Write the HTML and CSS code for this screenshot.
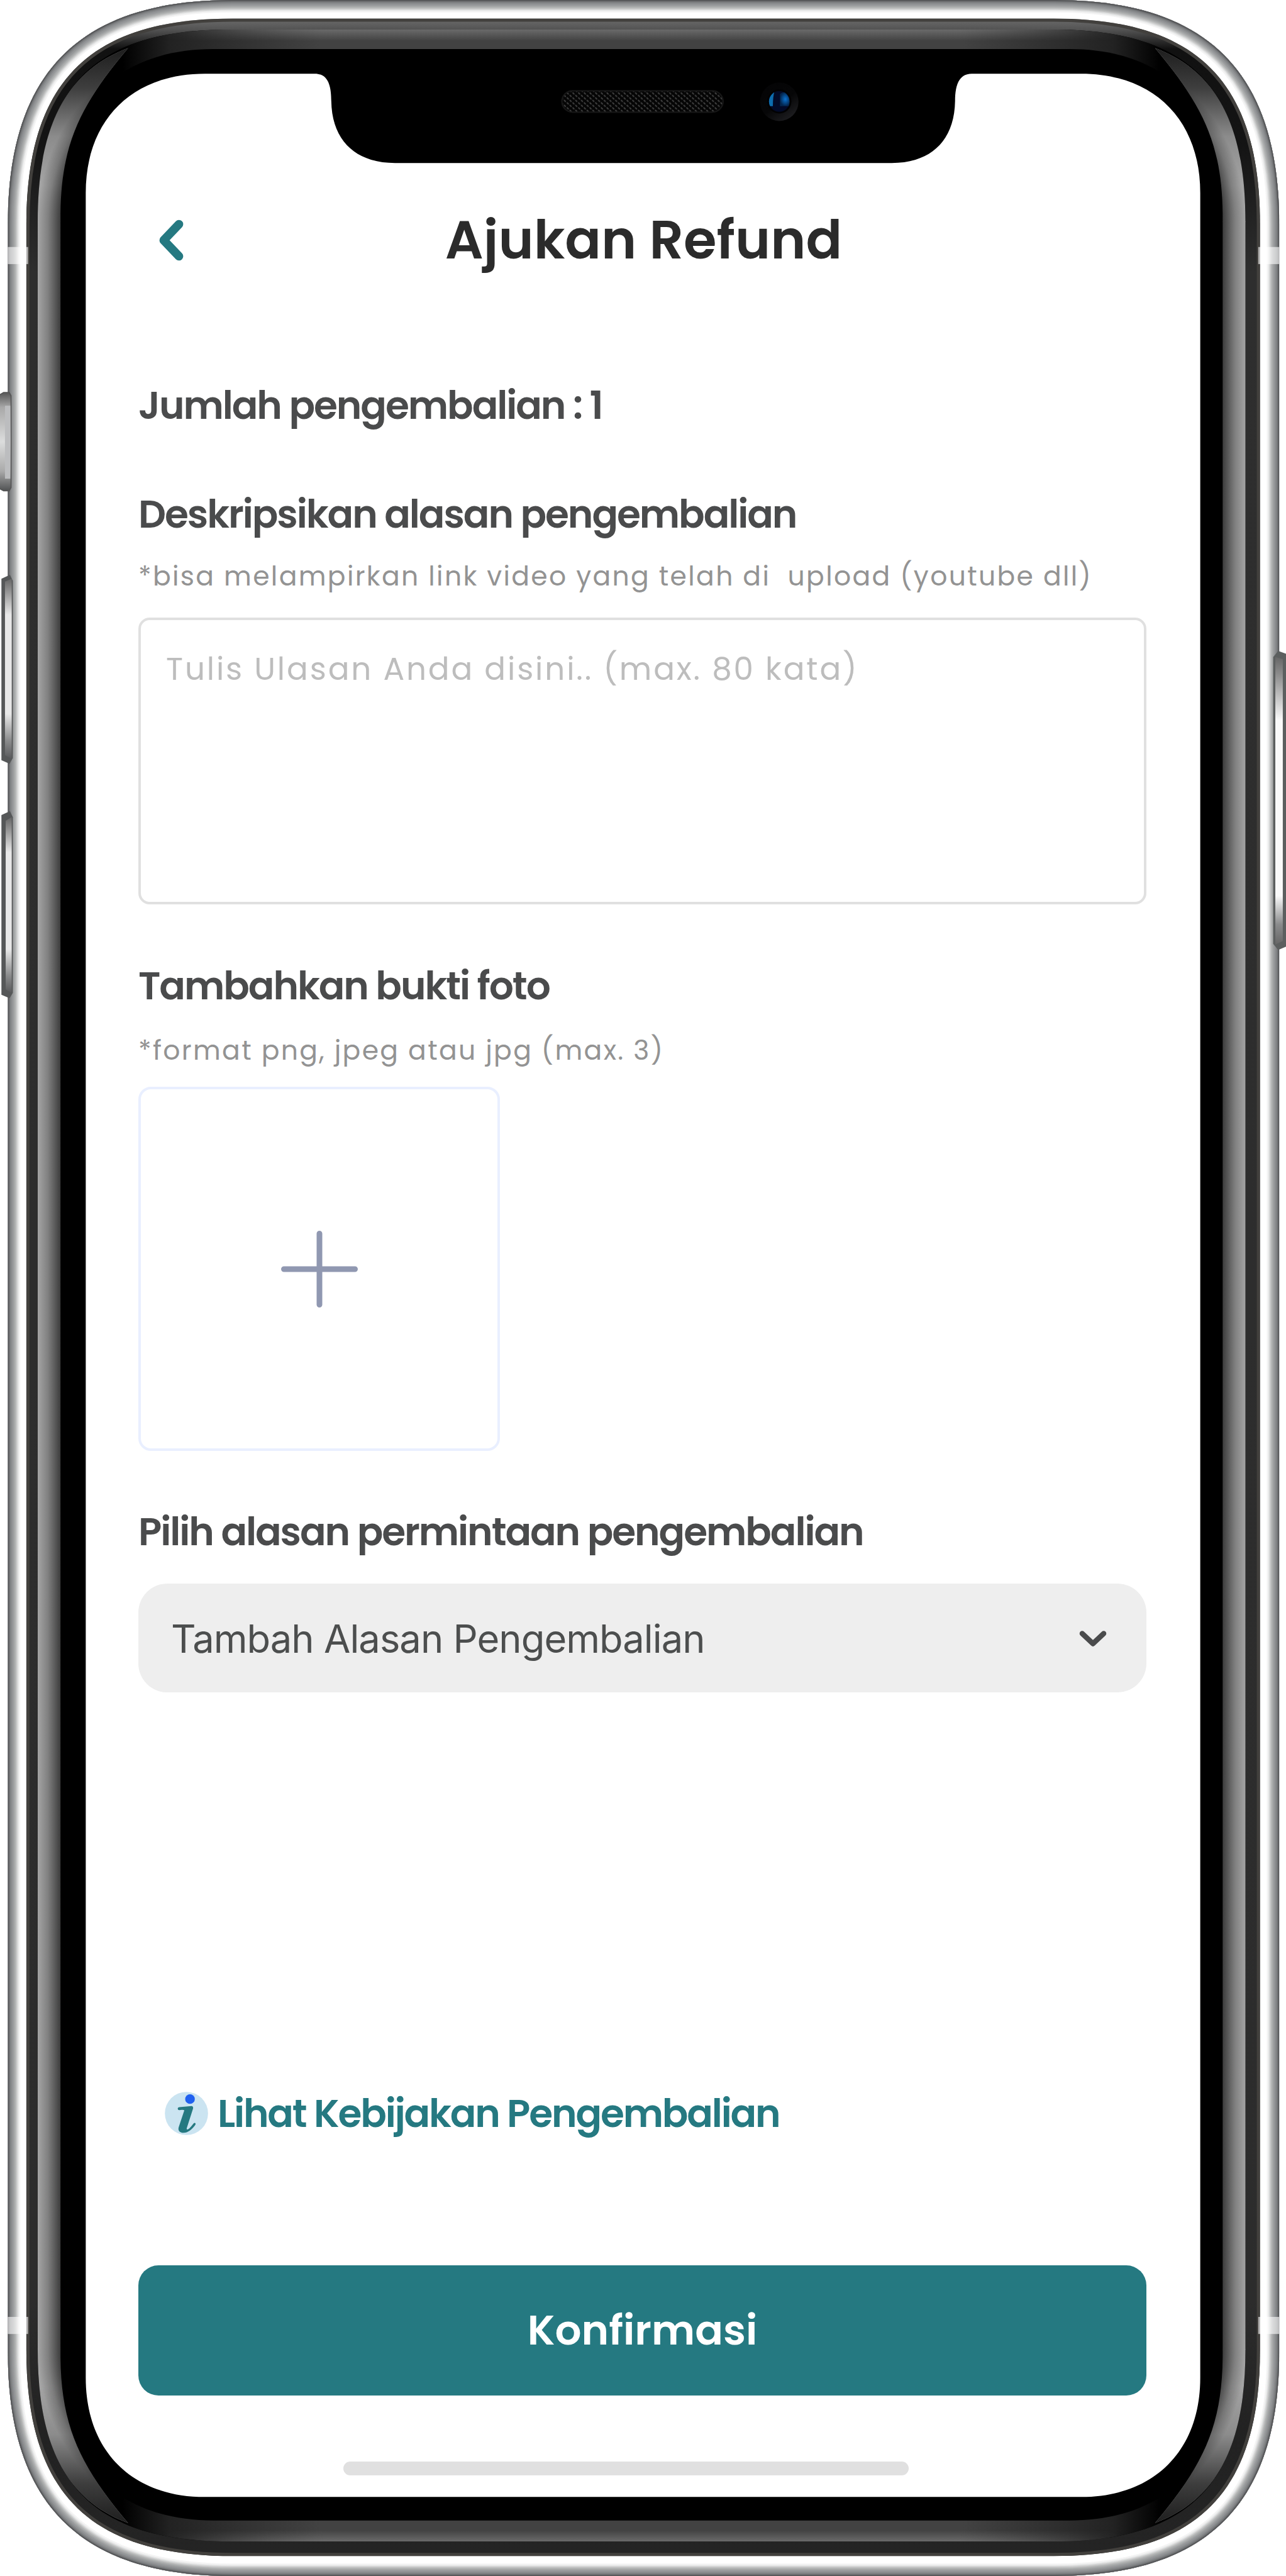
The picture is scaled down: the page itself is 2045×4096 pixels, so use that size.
FILE: index.html
```html
<!DOCTYPE html>
<html lang="id">
<head>
<meta charset="utf-8">
<title>Ajukan Refund</title>
<link rel="stylesheet" href="styles.css">
</head>
<body>
<div class="phone">
  <svg class="frame" viewBox="0 0 3614 7238" preserveAspectRatio="none" aria-hidden="true">
    <defs>
      <path id="body" d="M22 630C22 203 225 0 652 0H2965C3392 0 3595 203 3595 630V6608C3595 7035 3392 7238 2965 7238H652C225 7238 22 7035 22 6608Z"/>
      <path id="rim" d="M74 632C74 230 252 52 654 52H2961C3363 52 3541 230 3541 632V6602C3541 7004 3363 7182 2961 7182H654C252 7182 74 7004 74 6602Z"/>
      <path id="bezel" d="M106 623C106 243 266 83 646 83H2960C3340 83 3500 243 3500 623V6601C3500 6981 3340 7141 2960 7141H646C266 7141 106 6981 106 6601Z"/>
      <path id="glass" d="M170 568C170 299 331 138 600 138H3006C3275 138 3436 299 3436 568V6652C3436 6921 3275 7082 3006 7082H600C331 7082 170 6921 170 6652Z"/>
      <clipPath id="bodyClip"><use href="#body"/></clipPath>
      <clipPath id="rimClip"><use href="#rim"/></clipPath>
      <clipPath id="bezelClip"><use href="#bezel"/></clipPath>
      <linearGradient id="rimFill" gradientUnits="userSpaceOnUse" x1="0" y1="52" x2="0" y2="7182">
        <stop offset="0" stop-color="#6c6c6c"/><stop offset=".0045" stop-color="#525252"/>
        <stop offset=".012" stop-color="#111"/><stop offset=".05" stop-color="#141414"/>
        <stop offset=".1" stop-color="#2e2e2e"/><stop offset=".9" stop-color="#2c2c2c"/>
        <stop offset=".95" stop-color="#222"/><stop offset="1" stop-color="#242424"/>
      </linearGradient>
      <linearGradient id="topGlow" gradientUnits="userSpaceOnUse" x1="345" y1="0" x2="3261" y2="0">
        <stop offset="0" stop-color="#000"/><stop offset=".045" stop-color="#222"/>
        <stop offset=".19" stop-color="#424242"/><stop offset=".81" stop-color="#424242"/>
        <stop offset=".955" stop-color="#222"/><stop offset="1" stop-color="#000"/>
      </linearGradient>
      <linearGradient id="fadeX" gradientUnits="userSpaceOnUse" x1="450" y1="0" x2="3156" y2="0">
        <stop offset="0" stop-color="#000"/><stop offset=".17" stop-color="#fff"/>
        <stop offset=".83" stop-color="#fff"/><stop offset="1" stop-color="#000"/>
      </linearGradient>
      <mask id="fadeMask" maskUnits="userSpaceOnUse" x="0" y="0" width="3614" height="7238"><rect width="3614" height="7238" fill="url(#fadeX)"/></mask>
      <linearGradient id="sheenTop" x1="0" y1="0" x2="0" y2="1">
        <stop offset="0" stop-color="#6a6a6a"/><stop offset="1" stop-color="#6a6a6a" stop-opacity="0"/>
      </linearGradient>
      <linearGradient id="sheenBottom" x1="0" y1="1" x2="0" y2="0">
        <stop offset="0" stop-color="#6a6a6a"/><stop offset="1" stop-color="#6a6a6a" stop-opacity="0"/>
      </linearGradient>
      <linearGradient id="leftGlow" gradientUnits="userSpaceOnUse" x1="106" y1="0" x2="170" y2="0">
        <stop offset="0" stop-color="#a4a4a4"/><stop offset=".45" stop-color="#808080"/><stop offset="1" stop-color="#3c3c3c"/>
      </linearGradient>
      <linearGradient id="rightGlow" gradientUnits="userSpaceOnUse" x1="3500" y1="0" x2="3436" y2="0">
        <stop offset="0" stop-color="#a4a4a4"/><stop offset=".45" stop-color="#808080"/><stop offset="1" stop-color="#3c3c3c"/>
      </linearGradient>
      <radialGradient id="cornerGlow" gradientUnits="userSpaceOnUse" cx="620" cy="622" r="514">
        <stop offset=".875" stop-color="#3c3c3c"/><stop offset=".944" stop-color="#808080"/><stop offset="1" stop-color="#a4a4a4"/>
      </radialGradient>
      <linearGradient id="cornerShade" gradientUnits="userSpaceOnUse" x1="0" y1="130" x2="0" y2="520">
        <stop offset="0" stop-color="#1c1c1c"/><stop offset=".3" stop-color="#1c1c1c" stop-opacity=".75"/><stop offset=".65" stop-color="#1c1c1c" stop-opacity=".18"/><stop offset="1" stop-color="#1c1c1c" stop-opacity="0"/>
      </linearGradient>
      <g id="corner">
        <path d="M106 623C106 380 170 205 360 135C230 290 172 400 170 600V623Z" fill="url(#cornerGlow)"/>
        <path d="M105 623C105 380 170 205 360 135C230 290 172 400 171 600V623Z" fill="url(#cornerShade)"/>
      </g>
      <linearGradient id="key" x1="0" y1="0" x2="0" y2="1">
        <stop offset="0" stop-color="#666"/><stop offset=".06" stop-color="#8c8c8c"/><stop offset=".2" stop-color="#e8e8e8"/>
        <stop offset=".75" stop-color="#e8e8e8"/><stop offset=".9" stop-color="#8a8b8c"/><stop offset="1" stop-color="#58595b"/>
      </linearGradient>
      <linearGradient id="power" x1="0" y1="0" x2="0" y2="1">
        <stop offset="0" stop-color="#666"/><stop offset=".06" stop-color="#8c8c8c"/><stop offset=".22" stop-color="#fafafa"/>
        <stop offset=".83" stop-color="#fafafa"/><stop offset=".93" stop-color="#8a8b8c"/><stop offset="1" stop-color="#666"/>
      </linearGradient>
      <linearGradient id="switch" x1="0" y1="0" x2="0" y2="1">
        <stop offset="0" stop-color="#555"/><stop offset=".15" stop-color="#a8a8a8"/><stop offset=".5" stop-color="#dcdddd"/>
        <stop offset=".8" stop-color="#aaa"/><stop offset="1" stop-color="#505253"/>
      </linearGradient>
      <pattern id="mesh" width="16" height="14" patternUnits="userSpaceOnUse">
        <rect width="16" height="14" fill="#050505"/>
        <path d="M1 1L6 6M9 8L14 13" stroke="#4a4a4a" stroke-width="3"/>
      </pattern>
      <linearGradient id="lensRing" x1="0" y1="0" x2=".7" y2="1">
        <stop offset="0" stop-color="#040405"/><stop offset=".6" stop-color="#060607"/><stop offset="1" stop-color="#1d1d20"/>
      </linearGradient>
      <radialGradient id="lensBlue"><stop offset="0" stop-color="#0a72d0"/><stop offset="1" stop-color="#03264f"/></radialGradient>
      <clipPath id="lensClip"><circle cx="2190" cy="285" r="29"/></clipPath>
    </defs>

    <!-- steel band -->
    <use href="#body" fill="#fff"/>
    <g clip-path="url(#bodyClip)" fill="none">
      <use href="#body" stroke="#f4f4f4" stroke-width="70"/>
      <use href="#body" stroke="#e6e7e7" stroke-width="62"/>
      <use href="#body" stroke="#d2d3d3" stroke-width="56"/>
      <use href="#body" stroke="#bfc0c0" stroke-width="50"/>
      <use href="#body" stroke="#adafaf" stroke-width="44"/>
      <use href="#body" stroke="#9fa1a2" stroke-width="37"/>
      <use href="#body" stroke="#939597" stroke-width="30"/>
      <use href="#body" stroke="#86888a" stroke-width="22"/>
      <use href="#body" stroke="#757779" stroke-width="14"/>
      <use href="#body" stroke="#58595b" stroke-width="7"/>
    </g>

    <!-- dark rim and glass edge -->
    <use href="#rim" fill="url(#rimFill)"/>
    <g clip-path="url(#rimClip)"><use href="#rim" fill="none" stroke="#42403d" stroke-width="18"/></g>
    <use href="#bezel" fill="#000"/>
    <g clip-path="url(#bezelClip)">
      <path d="M345 83H3261V320H345ZM345 6900H3261V7141H345Z" fill="url(#topGlow)"/>
      <g mask="url(#fadeMask)">
        <rect x="450" y="83" width="2706" height="32" fill="url(#sheenTop)"/>
        <rect x="450" y="7109" width="2706" height="32" fill="url(#sheenBottom)"/>
      </g>
    </g>
    <use href="#glass" fill="#000"/>
    <use href="#corner"/>
    <use href="#corner" transform="translate(3606 0) scale(-1 1)"/>
    <use href="#corner" transform="translate(0 7224) scale(1 -1)"/>
    <use href="#corner" transform="translate(3606 7224) scale(-1 -1)"/>
    <rect x="106" y="622" width="64" height="5980" fill="url(#leftGlow)"/>
    <rect x="3436" y="622" width="64" height="5980" fill="url(#rightGlow)"/>

    <!-- display area with notch -->
    <path d="M241 542C241 337 371 207 576 207H885C924 207 931 245 931 284C933 400 1005 458 1110 458H2506C2611 458 2682 400 2684 284C2684 245 2692 207 2731 207H3038C3243 207 3373 337 3373 542V6681C3373 6886 3243 7016 3038 7016H576C371 7016 241 6886 241 6681Z" fill="#fff"/>
    <rect x="1579" y="255" width="453" height="60" rx="30" fill="url(#mesh)" stroke="#161616" stroke-width="4"/>
    <circle cx="2190" cy="286" r="54" fill="url(#lensRing)"/>
    <circle cx="2190" cy="285" r="34" fill="#020203"/>
    <g clip-path="url(#lensClip)">
      <rect x="2160" y="255" width="60" height="60" fill="#020a28"/>
      <path d="M2155 255H2177Q2172 270 2172 298H2155Z" fill="#0d6cae"/>
      <path d="M2192 264Q2200 256 2216 262L2222 298H2192Z" fill="url(#lensBlue)"/>
    </g>

    <!-- antenna bands -->
    <g fill="#fff" opacity=".6">
      <rect x="22" y="694" width="57" height="48"/><rect x="3536" y="694" width="59" height="48"/>
      <rect x="22" y="6510" width="57" height="48"/><rect x="3536" y="6510" width="59" height="48"/>
    </g>

    <!-- side keys -->
    <path d="M-6 1112L10 1103H26L31 1112V1370L26 1379H10L-6 1370Z" fill="url(#switch)" stroke="#555" stroke-width="3"/>
    <rect x="14" y="1140" width="15" height="205" fill="#bcbdbf"/>
    <g>
      <path d="M4 1626L28 1615L36 1632V2130L27 2146L4 2136Z" fill="#555758"/>
      <path d="M14 1634L33 1626V2132L14 2122Z" fill="url(#key)"/>
    </g>
    <g>
      <path d="M4 2290L28 2279L36 2296V2790L27 2805L4 2795Z" fill="#555758"/>
      <path d="M16 2306L33 2296V2790L16 2780Z" fill="url(#key)"/>
    </g>
    <path d="M3578 1846L3592 1829L3614 1837V2660L3592 2669L3578 2652Z" fill="#5c5f5f"/>
    <path d="M3584 1846L3605 1852V2644L3584 2654Z" fill="url(#power)"/>
  </svg>

  <main class="screen">
    <header class="bar">
      <svg class="back" viewBox="0 0 40 68" aria-label="Kembali"><path d="M32.6 8.5L8.3 34L32.6 59.5"/></svg>
      <h1 class="title">Ajukan Refund</h1>
    </header>
    <p class="label label-count">Jumlah pengembalian : 1</p>
    <h2 class="label label-desc">Deskripsikan alasan pengembalian</h2>
    <p class="hint hint-desc">*bisa melampirkan link video yang telah di&nbsp; upload (youtube dll)</p>
    <div class="review">Tulis Ulasan Anda disini.. (max. 80 kata)</div>
    <h2 class="label label-photo">Tambahkan bukti foto</h2>
    <p class="hint hint-photo">*format png, jpeg atau jpg (max. 3)</p>
    <div class="upload"><svg class="plus" viewBox="0 0 122 122"><path d="M61 4.5V117.5M4.5 61H117.5"/></svg></div>
    <h2 class="label label-reason">Pilih alasan permintaan pengembalian</h2>
    <div class="select">
      <span>Tambah Alasan Pengembalian</span>
      <svg class="chevron" viewBox="0 0 44 28"><path d="M5 5.5L22 21.5L39 5.5"/></svg>
    </div>
    <a class="policy">
      <svg class="info" viewBox="73 119 366 368">
        <circle cx="256" cy="303" r="183" fill="#cbe4f1"/>
        <circle cx="286" cy="181" r="41" fill="#2060f0"/>
        <path d="M182 263Q182 250 196 249L298 240Q316 241 312 262L258 430Q256 443 268 438Q285 430 315 390Q326 378 333 388Q336 394 328 404C300 440 268 467 232 467C195 467 183 445 190 420L238 276Q225 269 205 274Q182 279 182 263Z" fill="#257981"/>
      </svg>
      <span>Lihat Kebijakan Pengembalian</span>
    </a>
    <button class="confirm">Konfirmasi</button>
    <div class="home"></div>
  </main>
</div>
</body>
</html>
```
FILE: styles.css
```css
* { box-sizing: border-box; }
body { margin: 0; background: #fff; }
h1, h2, p { margin: 0; }

.phone {
  position: relative;
  width: 2045px;
  height: 4096px;
  overflow: hidden;
  font-family: Poppins, Inter, "Open Sans", sans-serif;
}
.frame { position: absolute; inset: 0; width: 100%; height: 100%; }

.screen {
  position: relative;
  display: flex;
  flex-direction: column;
  width: 1603px;
  margin-left: 220px;
  padding-top: 332px;
}

.bar { display: flex; align-items: center; height: 100px; padding-left: 32px; }
.back { width: 40px; height: 68px; fill: none; stroke: #257981; stroke-width: 13.5; stroke-linecap: round; stroke-linejoin: round; }
.title { flex: 1; margin-right: 68px; text-align: center; font-size: 85.1px; line-height: 100px; font-weight: 600; color: #2b2b2b; }

.label { font-size: 61.4px; line-height: 80px; font-weight: 600; letter-spacing: -2.05px; color: #4a4b4c; white-space: nowrap; }
.label-count { margin-top: 173px; }
.label-desc { margin-top: 93px; }
.label-photo { margin-top: 90px; }
.label-reason { margin-top: 89px; }

.hint { font-size: 42.5px; line-height: 60px; letter-spacing: 2.33px; color: #939393; white-space: nowrap; }
.hint-desc { margin-top: 28px; }
.hint-photo { margin-top: 32px; }

.review { height: 456px; margin-top: 36px; padding: 44px 40px; border: 4px solid #e0e0e0; border-radius: 18px; font-size: 50px; line-height: 68px; letter-spacing: 2.86px; color: #bdbdbd; }

.upload { display: flex; align-items: center; justify-content: center; width: 575px; height: 579px; margin-top: 28px; border: 4.5px solid #e9efff; border-radius: 20px; }
.plus { width: 122px; height: 122px; fill: none; stroke: #9098b1; stroke-width: 9; stroke-linecap: round; }

.select { display: flex; align-items: center; justify-content: space-between; height: 173px; margin-top: 42px; padding: 3px 63px 0 52px; border-radius: 46px; background: #eee; font-family: Inter, sans-serif; font-size: 61.4px; letter-spacing: -.94px; color: #4c4e4e; }
.chevron { width: 44px; height: 28px; fill: none; stroke: #4a4b4c; stroke-width: 8.5; stroke-linecap: round; stroke-linejoin: round; }

.policy { display: flex; align-items: center; gap: 15px; height: 80px; margin-top: 629px; padding-left: 42px; font-size: 61.4px; font-weight: 600; letter-spacing: -2.15px; color: #257981; white-space: nowrap; }
.info { width: 69px; height: 69px; }

.confirm { height: 207px; margin-top: 202px; padding: 0; border: 0; border-radius: 32px; background: #257981; font: inherit; font-size: 66px; font-weight: 600; color: #fff; }
.home { width: 899px; height: 22px; margin: 105px 0 0 326px; border-radius: 11px; background: #e0e0e0; }
```
